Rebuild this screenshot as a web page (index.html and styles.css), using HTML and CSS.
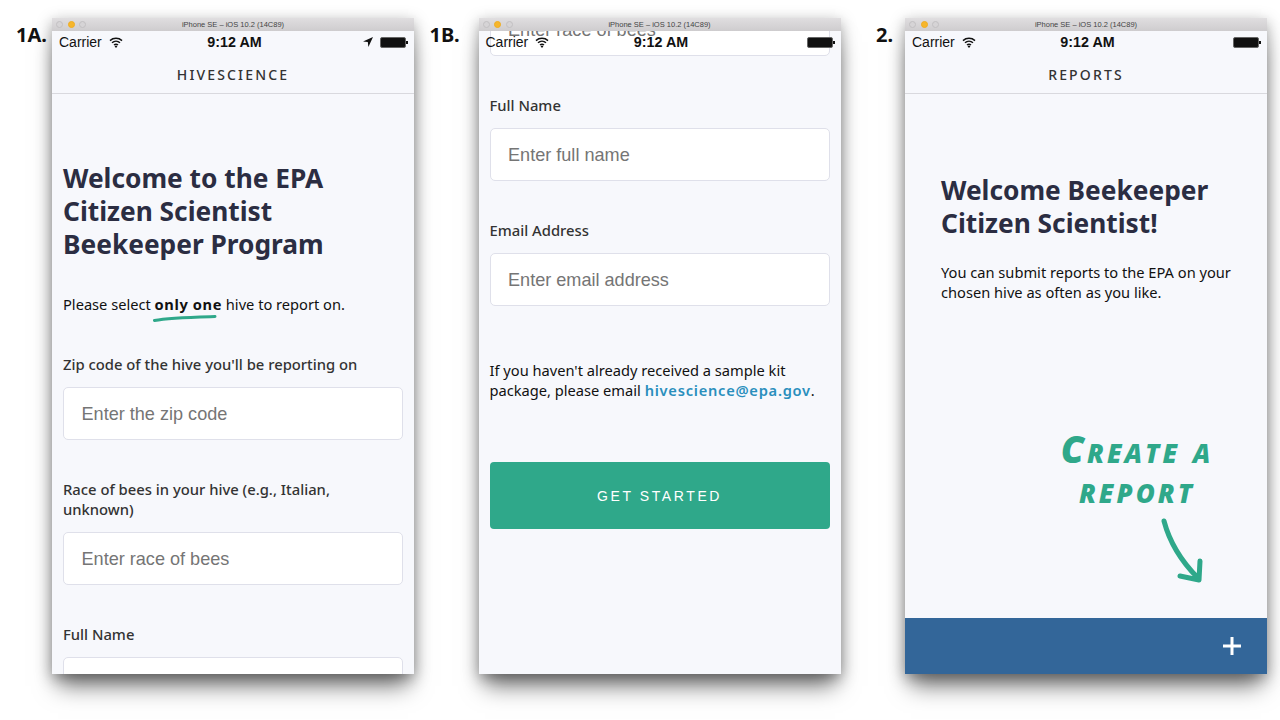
FILE: index.html
```html
<!DOCTYPE html>
<html lang="en">
<head>
  <meta charset="UTF-8">
  <meta name="viewport" content="width=device-width, initial-scale=1.0">
  <title>HiveScience Screens</title>
  <link rel="stylesheet" href="styles.css">
</head>
<body>
  <div class="deck">

    <!-- 1A -->
    <div class="window">
      <span class="step step-1a">1A.</span>
      <div class="titlebar">
        <span class="dot"></span><span class="dot dot-yellow"></span><span class="dot"></span>
        <span class="title">iPhone SE – iOS 10.2 (14C89)</span>
      </div>
      <div class="screen">
        <div class="statusbar">
          <span class="carrier">Carrier</span>
          <svg class="wifi" viewBox="0 0 14 11"><path d="M1 3.6C4.4.6 9.6.6 13 3.6M3 5.8c2.3-2 5.7-2 8 0M5 8c1.2-1 2.8-1 4 0" fill="none" stroke="#111" stroke-width="1.5"/><path d="M7 11 5.6 9.2c.8-.5 2-.5 2.8 0z" fill="#111"/></svg>
          <span class="clock">9:12 AM</span>
          <svg class="locate" viewBox="0 0 10 10"><path d="M10 0 0 4.6l4.8.5.6 4.9z" fill="#111"/></svg>
          <span class="battery"></span>
        </div>
        <div class="navbar">HIVESCIENCE</div>
        <div class="content welcome">
          <h1>Welcome to the EPA Citizen Scientist Beekeeper Program</h1>
          <p class="intro">Please select <strong class="only">only one<svg class="squiggle" viewBox="0 0 64 8"><path d="M1.5 6.5C16 3.5 44 3 62 2.5" fill="none" stroke="#2fa88a" stroke-width="3" stroke-linecap="round"/></svg></strong> hive to report on.</p>
          <label class="field-label">Zip code of the hive you'll be reporting on</label>
          <input class="field" type="text" placeholder="Enter the zip code">
          <label class="field-label">Race of bees in your hive (e.g., Italian, unknown)</label>
          <input class="field" type="text" placeholder="Enter race of bees">
          <label class="field-label">Full Name</label>
          <input class="field" type="text">
        </div>
      </div>
    </div>

    <!-- 1B -->
    <div class="window">
      <span class="step step-1b">1B.</span>
      <div class="titlebar">
        <span class="dot"></span><span class="dot dot-yellow"></span><span class="dot"></span>
        <span class="title">iPhone SE – iOS 10.2 (14C89)</span>
      </div>
      <div class="screen">
        <div class="statusbar">
          <span class="carrier">Carrier</span>
          <svg class="wifi" viewBox="0 0 14 11"><path d="M1 3.6C4.4.6 9.6.6 13 3.6M3 5.8c2.3-2 5.7-2 8 0M5 8c1.2-1 2.8-1 4 0" fill="none" stroke="#111" stroke-width="1.5"/><path d="M7 11 5.6 9.2c.8-.5 2-.5 2.8 0z" fill="#111"/></svg>
          <span class="clock">9:12 AM</span>
          <span class="battery"></span>
        </div>
        <div class="content scrolled">
          <input class="field" type="text" placeholder="Enter race of bees">
          <label class="field-label">Full Name</label>
          <input class="field" type="text" placeholder="Enter full name">
          <label class="field-label">Email Address</label>
          <input class="field" type="text" placeholder="Enter email address">
          <p class="kit">If you haven't already received a sample kit package, please email <a href="#">hivescience@epa.gov</a>.</p>
          <button class="btn-start">GET STARTED</button>
        </div>
      </div>
    </div>

    <!-- 2 -->
    <div class="window">
      <span class="step step-2">2.</span>
      <div class="titlebar">
        <span class="dot"></span><span class="dot dot-yellow"></span><span class="dot"></span>
        <span class="title">iPhone SE – iOS 10.2 (14C89)</span>
      </div>
      <div class="screen">
        <div class="statusbar">
          <span class="carrier">Carrier</span>
          <svg class="wifi" viewBox="0 0 14 11"><path d="M1 3.6C4.4.6 9.6.6 13 3.6M3 5.8c2.3-2 5.7-2 8 0M5 8c1.2-1 2.8-1 4 0" fill="none" stroke="#111" stroke-width="1.5"/><path d="M7 11 5.6 9.2c.8-.5 2-.5 2.8 0z" fill="#111"/></svg>
          <span class="clock">9:12 AM</span>
          <span class="battery"></span>
        </div>
        <div class="navbar">REPORTS</div>
        <div class="content reports">
          <h1>Welcome Beekeeper Citizen Scientist!</h1>
          <p class="lead">You can submit reports to the EPA on your chosen hive as often as you like.</p>
          <div class="hand">Create a<br>report</div>
          <svg class="arrow" viewBox="0 0 44 68"><path d="M4 3C9 22 19 41 38 60M20 58l19 4 1-19" fill="none" stroke="#2fa88a" stroke-width="5" stroke-linecap="round" stroke-linejoin="round"/></svg>
        </div>
        <div class="addbar">
          <svg class="plus" viewBox="0 0 18 18"><path d="M9 0v18M0 9h18" stroke="#fff" stroke-width="3"/></svg>
        </div>
      </div>
    </div>

  </div>
</body>
</html>
```

FILE: styles.css
```css
/* Base styles */
* {
  margin: 0;
  padding: 0;
  box-sizing: border-box;
}

body {
  font-family: "Noto Sans", "Open Sans", sans-serif;
  background: #fff;
  color: #2b2d42;
  height: 720px;
  overflow: hidden;
}

.deck {
  display: grid;
  grid-template-columns: repeat(3, 362px);
  column-gap: 64.5px;
  padding: 18px 0 0 52px;
}

/* Simulator window */
.window {
  position: relative;
  height: 656px;
  display: flex;
  flex-direction: column;
  box-shadow: 0 18px 22px -6px rgba(0, 0, 0, 0.5), 0 4px 14px rgba(0, 0, 0, 0.35);
}

.step {
  position: absolute;
  top: 3px;
  font-size: 20px;
  font-weight: 700;
  color: #111;
  line-height: 27px;
}

.step-1a {
  left: -36px;
}

.step-1b {
  left: -49px;
}

.step-2 {
  left: -29px;
}

.titlebar {
  position: relative;
  height: 13px;
  flex: none;
  display: flex;
  align-items: center;
  gap: 4.5px;
  padding-left: 4px;
  background: linear-gradient(to bottom, #e0dee0, #cecccE);
}

.dot {
  width: 7px;
  height: 7px;
  border-radius: 50%;
  background: #d6d4d6;
  border: 1px solid #c2c0c2;
}

.dot-yellow {
  background: #f6b62c;
  border-color: #f0ad20;
}

.title {
  position: absolute;
  left: 0;
  right: 0;
  text-align: center;
  font-family: "Liberation Sans", sans-serif;
  font-size: 7.5px;
  color: #444;
}

.screen {
  position: relative;
  flex: 1;
  display: flex;
  flex-direction: column;
  overflow: hidden;
  background: #f7f8fc;
}

/* Status bar lies over the scrolled page */
.statusbar {
  position: absolute;
  top: 0;
  left: 0;
  right: 0;
  height: 22px;
  display: flex;
  align-items: center;
  padding: 0 8px 0 7px;
  font-family: "Liberation Sans", sans-serif;
  font-size: 14px;
  color: #111;
  z-index: 2;
}

.wifi {
  width: 14px;
  height: 11px;
  margin-left: 7px;
}

.clock {
  position: absolute;
  left: 3px;
  right: 0;
  text-align: center;
  font-size: 14.3px;
  font-weight: 700;
}

.locate {
  width: 10px;
  height: 10px;
  margin-left: auto;
  margin-right: 7px;
}

.battery {
  position: relative;
  width: 26px;
  height: 11px;
  margin-left: auto;
  background: #111;
  border: 1px solid #666;
  border-radius: 2px;
}

.locate + .battery {
  margin-left: 0;
}

.battery::after {
  content: "";
  position: absolute;
  right: -3px;
  top: 3px;
  width: 2px;
  height: 3px;
  background: #111;
}

.navbar {
  flex: none;
  height: 63px;
  padding-top: 23px;
  line-height: 41px;
  text-align: center;
  font-size: 14px;
  font-weight: 500;
  letter-spacing: 2.15px;
  color: #333;
  border-bottom: 1px solid #d9d9de;
}

/* Page content */
.content {
  padding: 0 11px;
}

h1 {
  font-size: 26.3px;
  line-height: 33px;
  font-weight: 700;
  color: #2b2d42;
}

.welcome h1 {
  padding-top: 68px;
}

.intro {
  margin-top: 33px;
  font-size: 14.65px;
  line-height: 20px;
  color: #111;
}

.only {
  position: relative;
  font-weight: 700;
  letter-spacing: 0.6px;
}

.squiggle {
  position: absolute;
  left: -2px;
  top: 20px;
  width: 64px;
  height: 8px;
}

.field-label {
  display: block;
  margin-top: 39px;
  margin-bottom: 13px;
  padding-right: 40px;
  font-size: 14.8px;
  line-height: 20px;
  font-weight: 500;
  color: #333;
}

.intro + .field-label {
  margin-top: 40px;
}

.field {
  display: block;
  width: 100%;
  height: 53px;
  padding: 2px 0 0 17.5px;
  border: 1px solid #dfe0ea;
  border-radius: 5px;
  background: #fff;
  font-family: "Liberation Sans", sans-serif;
  font-size: 18.1px;
}

.field::placeholder {
  color: #757575;
  opacity: 1;
}

.scrolled {
  margin-top: -28px;
}

.kit {
  margin-top: 54px;
  font-size: 14.65px;
  line-height: 20px;
  color: #111;
}

.kit a {
  color: #2a8fbd;
  font-weight: 600;
  letter-spacing: 0.75px;
  text-decoration: none;
}

.btn-start {
  display: block;
  width: 100%;
  height: 67px;
  margin-top: 62px;
  padding-top: 1px;
  border: none;
  border-radius: 4px;
  background: #2fa88a;
  color: #fff;
  font-family: "Liberation Sans", sans-serif;
  font-size: 14px;
  letter-spacing: 2.6px;
}

/* Reports screen */
.reports {
  position: relative;
  flex: 1;
  padding: 80px 36px 0;
}

.lead {
  margin: 22px -6px 0 0;
  font-size: 14.65px;
  line-height: 20px;
  color: #111;
}

.hand {
  margin: 127px -20px 0 82px;
  text-align: center;
  font-family: "Open Sans", sans-serif;
  font-size: 37px;
  line-height: 40px;
  font-weight: 800;
  font-style: italic;
  font-variant: small-caps;
  letter-spacing: 3px;
  color: #2fa88a;
}

.arrow {
  display: block;
  width: 44px;
  height: 68px;
  margin: 9px 0 0 219px;
}

.addbar {
  flex: none;
  height: 56px;
  display: flex;
  align-items: center;
  justify-content: flex-end;
  padding-right: 26px;
  background: #336699;
}

.plus {
  width: 18px;
  height: 18px;
}
```
